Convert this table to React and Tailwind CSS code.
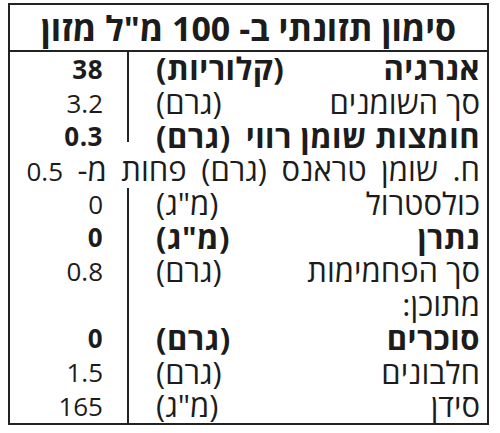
import React from "react";

const rows = [
  { label: "אנרגיה", unit: "(קלוריות)", value: "38", bold: true },
  { label: "סך השומנים", unit: "(גרם)", value: "3.2" },
  { label: "חומצות שומן רווי", unit: "(גרם)", value: "0.3", bold: true, cutBottom: true },
  { full: true },
  { label: "כולסטרול", unit: '(מ"ג)', value: "0", cutTop: true },
  { label: "נתרן", unit: '(מ"ג)', value: "0", bold: true },
  { label: "סך הפחמימות", unit: "(גרם)", value: "0.8" },
  { label: "מתוכן:", unit: "", value: "" },
  { label: "סוכרים", unit: "(גרם)", value: "0", bold: true },
  { label: "חלבונים", unit: "(גרם)", value: "1.5" },
  { label: "סידן", unit: '(מ"ג)', value: "165" },
];

const Row = ({ row }) => {
  if (row.full) {
    return (
      <div className="h-[33.7px] flex items-center pr-[7px] text-[31px] leading-none whitespace-nowrap [word-spacing:6.5px]">
        <span>
          ח. שומן טראנס (גרם) פחות מ- <span className="text-[26px]">0.5</span>
        </span>
      </div>
    );
  }

  const weight = row.bold ? "font-bold tracking-[0.5px]" : "font-normal";

  return (
    <div className={`h-[33.7px] flex items-stretch leading-none ${weight}`}>
      <div className="flex-1 flex items-center justify-between pr-[7px] pl-[27px] text-[31px]">
        <span>{row.label}</span>
        <span>{row.unit}</span>
      </div>
      <div
        className={`w-[2px] bg-[#222] ${row.cutBottom ? "mb-[11px]" : ""} ${
          row.cutTop ? "mt-[1px]" : ""
        }`}
      />
      <div className="w-[117px] flex items-center justify-end pr-[24px] text-[26px]" dir="ltr">
        <span>{row.value}</span>
      </div>
    </div>
  );
};

export default function App() {
  return (
    <div className="w-[500px] h-[433px] bg-white pt-[3px] pl-[8px]">
      <div
        dir="rtl"
        className="w-[481px] h-[422px] border-2 border-[#222] text-[#1c1c1c] flex flex-col"
        style={{ fontFamily: '"Open Sans", "DejaVu Sans", sans-serif' }}
      >
        <div className="h-[47px] border-b-2 border-[#222] flex items-center justify-center text-[34px] font-bold leading-none whitespace-nowrap">
          סימון תזונתי ב- 100 מ"ל מזון
        </div>
        {rows.map((row, i) => (
          <Row key={i} row={row} />
        ))}
      </div>
    </div>
  );
}
